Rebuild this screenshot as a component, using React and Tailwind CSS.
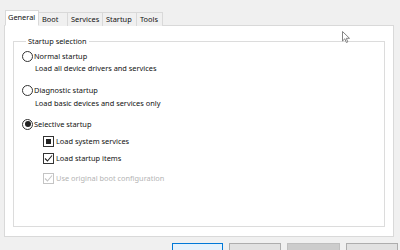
import React from 'react'

const font = { fontFamily: '"Noto Sans", "Liberation Sans", sans-serif' }

const Radio = ({ checked }) => (
    <span className="w-[11px] h-[11px] rounded-full border border-[#333] bg-white flex items-center justify-center shrink-0">
        {checked && <span className="w-[6px] h-[6px] rounded-full bg-[#222]" />}
    </span>
)

const Check = ({ state, disabled }) => (
    <span className={`w-[11px] h-[11px] border bg-white flex items-center justify-center shrink-0 ${disabled ? 'border-[#c4c4c4]' : 'border-[#333]'}`}>
        {state === 'mixed' && <span className="w-[5px] h-[5px] bg-[#222]" />}
        {state === 'checked' && (
            <svg width="9" height="9" viewBox="0 0 9 9">
                <path d="M1 4.5 L3.5 7 L8 1.5" fill="none" stroke={disabled ? '#c4c4c4' : '#222'} strokeWidth="1.1" />
            </svg>
        )}
    </span>
)

const tabs = [
    { label: 'General', w: 'w-[34px]' },
    { label: 'Boot', w: 'w-[30px]' },
    { label: 'Services', w: 'w-[36px]' },
    { label: 'Startup', w: 'w-[35px]' },
    { label: 'Tools', w: 'w-[27px]' },
]

export default function App() {
    return (
        <div className="w-[400px] h-[250px] bg-[#f0f0f0] relative overflow-hidden text-[7.4px] text-[#111]" style={font}>
            <div className="flex items-end pl-[5px] pt-[10px] h-[26px]">
                {tabs.map((t, i) => (
                    <div
                        key={t.label}
                        className={`${t.w} border border-[#d9d9d9] -mr-px flex items-center leading-none ${
                            i === 0 ? 'bg-white border-b-white h-[16px] pl-[2px] relative z-10' : 'bg-[#f0f0f0] border-b-0 h-[14px] pl-[3px]'
                        }`}
                    >
                        {t.label}
                    </div>
                ))}
            </div>
            <div className="ml-[4px] w-[390px] h-[212px] -mt-px bg-white border border-[#d9d9d9] pl-[8px] pt-[12px]">
                <fieldset className="w-[372px] h-[189px] border border-[#dcdcdc] pl-[8px]">
                    <legend className="ml-[4px] px-[2px] leading-none">Startup selection</legend>
                    <div className="flex items-center gap-[1px] mt-[5px] h-[12px]">
                        <Radio />
                        <span>Normal startup</span>
                    </div>
                    <div className="pl-[13px] h-[12px] leading-[12px]">Load all device drivers and services</div>
                    <div className="flex items-center gap-[1px] mt-[10px] h-[12px]">
                        <Radio />
                        <span>Diagnostic startup</span>
                    </div>
                    <div className="pl-[13px] mt-[1px] h-[12px] leading-[12px]">Load basic devices and services only</div>
                    <div className="flex items-center gap-[1px] mt-[9px] h-[12px]">
                        <Radio checked />
                        <span>Selective startup</span>
                    </div>
                    <div className="pl-[21px]">
                        <div className="flex items-center gap-[2px] mt-[5px] h-[12px]">
                            <Check state="mixed" />
                            <span>Load system services</span>
                        </div>
                        <div className="flex items-center gap-[2px] mt-[5px] h-[12px]">
                            <Check state="checked" />
                            <span>Load startup items</span>
                        </div>
                        <div className="flex items-center gap-[2px] mt-[8px] h-[12px] text-[#b4b4b4]">
                            <Check state="checked" disabled />
                            <span>Use original boot configuration</span>
                        </div>
                    </div>
                </fieldset>
            </div>
            <div className="flex gap-[6px] pl-[172px] mt-[6px]">
                <div className="w-[51px] h-[20px] border border-[#0078d7] bg-[#e5f1fb] flex justify-center pt-[5px]">OK</div>
                <div className="w-[52px] h-[20px] border border-[#adadad] bg-[#e1e1e1] flex justify-center pt-[5px]">Cancel</div>
                <div className="w-[53px] h-[20px] border border-[#bfbfbf] bg-[#cccccc] flex justify-center pt-[5px] text-[#838383]">Apply</div>
                <div className="w-[52px] h-[20px] border border-[#adadad] bg-[#e1e1e1] flex justify-center pt-[5px]">Help</div>
            </div>
            <svg className="absolute left-[342px] top-[31px]" width="9" height="13" viewBox="0 0 9 13">
                <path d="M0.5 0.5 L0.5 10 L2.8 7.8 L4.4 11.5 L5.8 10.9 L4.3 7.3 L7.5 7.3 Z" fill="#fff" stroke="#777" strokeWidth="0.9" />
            </svg>
        </div>
    )
}
